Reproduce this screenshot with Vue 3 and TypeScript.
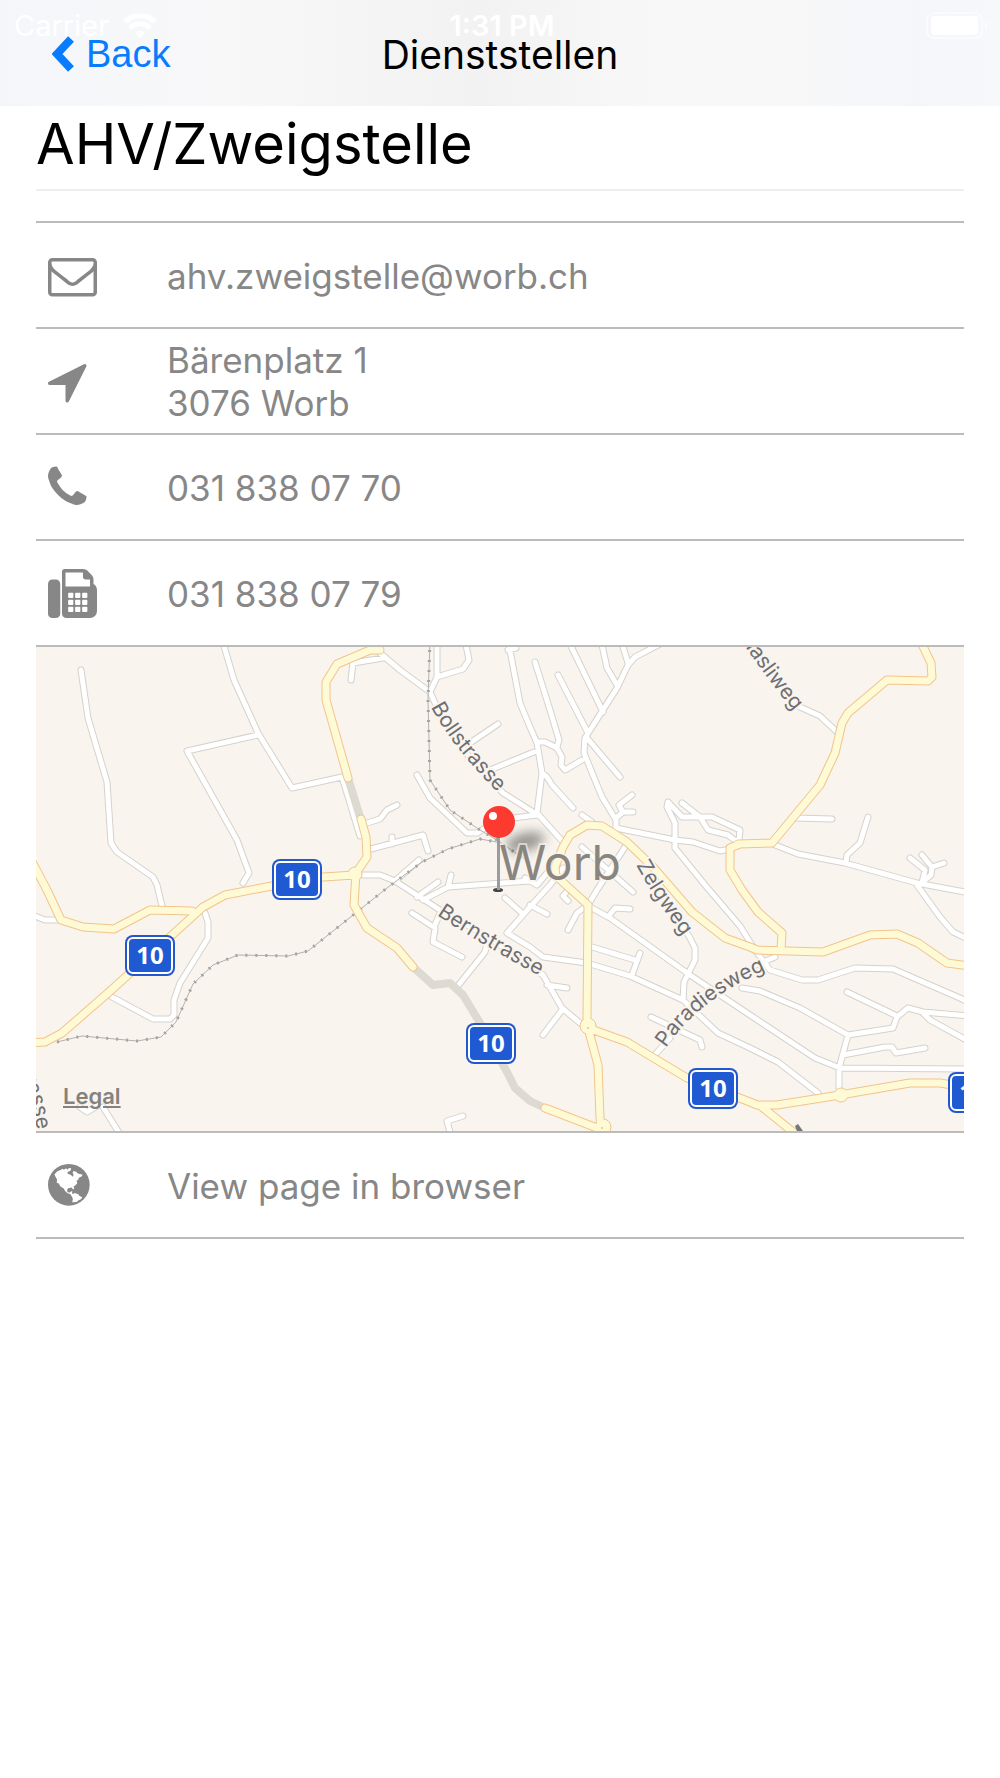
<script setup lang="ts">
interface ContactRow {
  icon: 'mail' | 'arrow' | 'phone' | 'fax'
  href: string
  lines: string[]
}

interface Shield {
  x: number
  y: number
}

const contacts: ContactRow[] = [
  { icon: 'mail', href: 'mailto:ahv.zweigstelle@worb.ch', lines: ['ahv.zweigstelle@worb.ch'] },
  { icon: 'arrow', href: '#map', lines: ['Bärenplatz 1', '3076 Worb'] },
  { icon: 'phone', href: 'tel:+41318380770', lines: ['031 838 07 70'] },
  { icon: 'fax', href: 'tel:+41318380779', lines: ['031 838 07 79'] },
]

const icons: Record<ContactRow['icon'], { box: string; path: string }> = {
  mail: {
    box: '0 0 1792 1792',
    path: 'M1664 1504v-768q-32 36-69 66-268 206-426 338-51 43-83 67t-86.5 48.5-102.5 24.5h-2q-48 0-102.5-24.5t-86.5-48.5-83-67q-158-132-426-338-37-30-69-66v768q0 13 9.5 22.5t22.5 9.5h1472q13 0 22.5-9.5t9.5-22.5zm0-1051v-24.5l-.5-13-3-12.5-5.5-9-9-7.5-14-2.5h-1472q-13 0-22.5 9.5t-9.5 22.5q0 168 147 284 193 152 401 317 6 5 35 29.5t46 37.5 44.5 31.5 50.5 27.5 43 9h2q20 0 43-9t50.5-27.5 44.5-31.5 46-37.5 35-29.5q208-165 401-317 54-43 100.5-115.5t46.5-131.5zm128-37v1088q0 66-47 113t-113 47h-1472q-66 0-113-47t-47-113v-1088q0-66 47-113t113-47h1472q66 0 113 47t47 113z',
  },
  arrow: {
    box: '192 0 1792 1792',
    path: 'M1593 349l-640 1280q-17 35-57 35-5 0-15-2-22-5-35.5-22.5t-13.5-39.5v-576h-576q-22 0-39.5-13.5t-22.5-35.5 4-42 29-30l1280-640q13-7 29-7 27 0 45 19 15 14 18.5 34.5t-6.5 39.5z',
  },
  phone: {
    box: '192 0 1792 1792',
    path: 'M1600 1240q0 27-10 70.5t-21 68.5q-21 50-122 106-94 51-186 51-27 0-53-3.5t-57.5-12.5-47-14.5-55.5-20.5-49-18q-98-35-175-83-127-79-264-216t-216-264q-48-77-83-175-3-9-18-49t-20.5-55.5-14.5-47-12.5-57.5-3.5-53q0-92 51-186 56-101 106-122 25-11 68.5-21t70.5-10q14 0 21 3 18 6 53 76 11 19 30 54t35 63.5 31 53.5q3 4 17.5 25t21.5 35.5 7 28.5q0 20-28.5 50t-62 55-62 53-28.5 46q0 9 5 22.5t8.5 20.5 14 24 11.5 19q76 137 174 235t235 174q2 1 19 11.5t24 14 20.5 8.5 22.5 5q18 0 46-28.5t53-62 55-62 50-28.5q14 0 28.5 7t35.5 21.5 25 17.5q25 15 53.5 31t63.5 35 54 30q70 35 76 53 3 7 3 21z',
  },
  fax: {
    box: '0 0 1792 1792',
    path:
      'M288 384q66 0 113 47t47 113v1088q0 66-47 113t-113 47h-128q-66 0-113-47t-47-113v-1088q0-66 47-113t113-47h128z' +
      'M1664 547q58 34 93 93t35 128v768q0 106-75 181t-181 75h-864q-66 0-113-47t-47-113v-1536q0-40 28-68t68-28h672q40 0 88 20t76 48l152 152q28 28 48 76t20 88v163z' +
      'M1536 640v-256h-160q-40 0-68-28t-28-68v-160h-640v512z' +
      [736, 992, 1248]
        .flatMap((x) =>
          [864, 1120, 1376].map(
            (y) => `M${x + 32} ${y}h128q32 0 32 32v128q0 32-32 32h-128q-32 0-32-32v-128q0-32 32-32z`,
          ),
        )
        .join(''),
  },
}

// Local streets
const streets: string = [
  'M81 670L88 718 107 782 111 843 117 852 153 877 157 885 162 906',
  'M224 646L234 680 258 733 292 788 342 777 360 836',
  'M258 735L187 751 237 840 249 873 243 883',
  'M30 914L45 920 57 920',
  'M205 913L208 922 208 938 180 983 174 1000 174 1015 170 1019 153 1019 112 997',
  'M380 653L400 670 430 692 435 703 465 752 503 793 530 810 537 815',
  'M383 658L353 663 351 680',
  'M430 692L437 677 437 640',
  'M437 677L463 669 469 660 465 640',
  'M508 640L520 703 530 727 537 743 542 773 537 813 563 842',
  'M508 650L516 648',
  'M498 724L470 743M534 752L490 770',
  'M417 775L430 798 467 833 477 833 487 827 513 818 537 815',
  'M367 823L380 819 387 810 397 805',
  'M371 849L423 835 428 851M392 844L392 837',
  'M363 875L380 875 395 881 440 910 490 938 530 967 543 975 562 1008 580 1023',
  'M419 860L395 881M438 882L417 897',
  'M423 900L448 887 530 881M451 875L448 887',
  'M412 913L435 928 433 942 462 957M435 925L440 913',
  'M457 987L485 952 487 943M505 898L522 913',
  'M507 933L530 907 550 885 563 868',
  'M507 933L530 947 543 957 587 963 630 976 683 1000 718 1033 750 1048 778 1062 818 1093',
  'M530 905L547 914M568 890L563 896 568 901',
  'M535 662L550 710 559 740 557 747',
  'M537 742L545 742 557 748 562 757 561 765 565 770 582 760',
  'M542 773L547 777 552 785 573 808',
  'M558 675L588 733M568 640L603 712M601 640L607 668 617 685M621 640L628 663',
  'M664 642L635 657 628 665 617 688 585 738 584 753 602 797 616 820 616 828',
  'M587 738L620 777',
  'M632 795L619 805 623 812 616 818M623 812L633 812M582 815L592 822',
  'M616 828L675 840 693 842 720 851 730 849',
  'M675 848L675 823 667 807 668 802 682 817 712 817 740 830 739 840',
  'M682 803L700 817 708 830 728 835 737 842',
  'M675 848L705 885 740 926 755 950 770 970 802 980 818 980 855 968 893 969 960 998 970 1003',
  'M582 847L633 892M625 847L597 890 588 905M547 873L537 885 525 878',
  'M588 905L577 913 568 930M608 917L615 908 630 909',
  'M590 907L610 918 690 975 750 1015 815 1058 840 1068 970 1069',
  'M592 947L635 960M640 953L632 975',
  'M682 925L690 938 695 948 695 960 684 982 683 1000',
  'M547 985L567 988M562 1010L543 1035',
  'M651 1017L700 1040 702 1047M653 1057L670 1038',
  'M742 988L760 991 800 1008 848 1035 893 1028 897 1017 908 1008 923 1012 970 1016',
  'M847 992L897 1016M923 1013L930 1020 970 1042',
  'M848 1035L839 1068 839 1088M843 1055L885 1047 892 1047 896 1053 925 1048',
  'M775 957L756 965',
  'M800 707L820 716 837 732M795 818L832 819',
  'M775 845L798 854 845 863 917 883 970 893',
  'M917 885L940 917 953 932 970 940',
  'M868 817L860 843 847 855 846 863',
  'M910 858L925 870 922 883M922 855L932 867 944 863M932 867L931 875 920 884',
  'M103 1107L121 1136M80 1107L87 1112 97 1106',
  'M463 1116L447 1121 451 1136',
].join('')

// Cantonal and main roads
const mainRoads: string = [
  'M30 858L47 890 61 920 83 927 114 929 150 910 192 911',
  'M28 1043L45 1042 62 1033 108 993 192 917 203 907 225 895 277 885 323 877 355 875',
  'M380 650L370 650 337 664 326 682 326 700 348 778',
  'M361 819L366 837 367 857 356 873 354 905 367 928 397 948 413 967',
  'M545 1108L597 1128 602 1130',
  'M740 844L730 848 730 870 742 890 758 912 782 933 781 950',
  'M588 905L556 876 555 867 563 847 570 835 587 825 602 826 627 842 653 867 673 890 692 912 725 938 750 947 757 950 823 952 870 935 897 934 918 943 947 963 970 966',
  'M588 905L587 1018 588 1028 598 1065 600 1118 602 1138',
  'M588 1028L627 1042 687 1078 750 1102 757 1105 777 1105 840 1095 910 1083 940 1083 970 1088',
  'M762 1107L798 1136',
  'M738 844L772 843 820 785 835 753 842 723 848 713 887 680 928 681 932 677 931 663 920 640',
].join('')

const tunnels = 'M348 778L360 817M413 967L433 985 450 983 463 995 480 1023 507 1072 515 1088 530 1101 545 1108'

const railways =
  'M57 1042L82 1036 137 1041 161 1037 176 1022 193 984 213 965 238 955 288 956 308 951 387 888 422 862 448 849 480 839 497 842' +
  'M430 640L428 700 430 780 450 810 480 830 497 840 530 863'

const shields: Shield[] = [
  { x: 272, y: 859 },
  { x: 125, y: 935 },
  { x: 466, y: 1023 },
  { x: 688, y: 1068 },
  { x: 948, y: 1072 },
]
</script>

<template>
  <div class="screen">
    <header class="navbar">
      <div class="status" aria-hidden="true">
        <span class="carrier">
          Carrier
          <svg class="wifi" viewBox="0 0 34 24">
            <path d="M17 24l5-5a7 7 0 0 0-10 0z" />
            <path d="M7 14a14 14 0 0 1 20 0M2 8a21 21 0 0 1 30 0" class="wave" />
          </svg>
        </span>
        <span class="clock">1:31 PM</span>
        <svg class="battery" viewBox="0 0 64 28">
          <rect x="1" y="1" width="55" height="25" rx="7" class="shell" />
          <rect x="5" y="4" width="47" height="19" rx="3" />
          <path d="M59 9q5 5 0 9z" class="cap" />
        </svg>
      </div>
      <div class="bar">
        <button type="button" class="back">
          <svg class="chevron" viewBox="0 0 22 36"><path d="M19 3L5 18l14 15" /></svg>
          Back
        </button>
        <span class="bar-title">Dienststellen</span>
      </div>
    </header>

    <main class="content">
      <h1 class="heading">AHV/Zweigstelle</h1>

      <div class="list">
        <a v-for="row in contacts" :key="row.icon" class="row" :href="row.href">
          <svg class="icon" :viewBox="icons[row.icon].box">
            <path fill-rule="evenodd" :d="icons[row.icon].path" />
          </svg>
          <span class="label">
            <span v-for="line in row.lines" :key="line" class="line">{{ line }}</span>
          </span>
        </a>

        <div id="map" class="map">
          <svg class="map-canvas" viewBox="36 647 928 484" role="img" aria-label="Map of Worb">
            <defs>
              <filter id="soft" x="-50%" y="-100%" width="200%" height="300%">
                <feGaussianBlur stdDeviation="6" />
              </filter>
              <path id="p-boll" d="M431 707Q454 751 510 804" />
              <path id="p-bern" d="M437 915Q480 944 556 985" />
              <path id="p-zelg" d="M636 865Q658 905 694 951" />
              <path id="p-para" d="M666 1048Q700 996 780 964" />
              <path id="p-hasli" d="M727 619Q760 671 794 711" />
              <path id="p-edge" d="M6 1050Q30 1080 37 1130" />
            </defs>
            <rect x="36" y="647" width="928" height="484" fill="#f9f5ee" />
            <path :d="streets" class="street-edge" />
            <path :d="streets" class="street" />
            <path :d="tunnels" class="tunnel" />
            <path :d="railways" class="rail" />
            <path :d="railways" class="rail-ties" />
            <path :d="mainRoads" class="main-edge" />
            <circle cx="588" cy="1026" r="8" class="junction" />
            <circle cx="603" cy="1127" r="8" class="junction" />
            <circle cx="841" cy="1095" r="7" class="junction" />
            <circle cx="355" cy="874" r="7" class="junction" />
            <path :d="mainRoads" class="main" />
            <circle cx="588" cy="1028" r="1" fill="#dfc590" />
            <circle cx="602" cy="1128" r="1" fill="#dfc590" />
            <path d="M795 1126l3-2 5 7h-6z" fill="#77777b" />

            <g class="road-name">
              <text><textPath href="#p-boll">Bollstrasse</textPath></text>
              <text><textPath href="#p-bern">Bernstrasse</textPath></text>
              <text><textPath href="#p-zelg">Zelgweg</textPath></text>
              <text><textPath href="#p-para">Paradiesweg</textPath></text>
              <text text-anchor="end"><textPath href="#p-hasli" startOffset="100%">Hasliweg</textPath></text>
              <text text-anchor="end"><textPath href="#p-edge" startOffset="100%">strasse</textPath></text>
            </g>

            <g v-for="s in shields" :key="`${s.x}-${s.y}`" class="shield">
              <rect :x="s.x" :y="s.y" width="50" height="41" rx="8" fill="#2257cf" />
              <rect :x="s.x + 3" :y="s.y + 3" width="44" height="35" rx="5" fill="#1f5ad2" stroke="#fff" stroke-width="2" />
              <text :x="s.x + 25" :y="s.y + 29" text-anchor="middle">10</text>
            </g>

            <ellipse cx="525" cy="842" rx="20" ry="9" transform="rotate(-15 525 842)" fill="#000" opacity=".4" filter="url(#soft)" />
            <text x="499" y="880" class="town">Worb</text>
            <ellipse cx="498" cy="890" rx="5" ry="2" fill="#444" />
            <rect x="497" y="836" width="3" height="54" fill="#9a9d9f" />
            <circle cx="499" cy="822" r="16" fill="#fd3a30" />
            <circle cx="493" cy="816" r="4" fill="#fff" />
          </svg>
          <a class="legal" href="#legal">Legal</a>
        </div>

        <a class="row" href="#browser">
          <svg class="icon globe" viewBox="55 135 125 125">
            <circle cx="117" cy="197" r="62" />
            <path
              fill="#fff"
              d="M74 166l8-9 12-5 4-3 4 3 7-4 3 4 6-5 6 1-2 7-9 4 1 5 8 3 7 6 2-7-3-5 3-5 8 2 5 5 14 4-3 5-8 4-2 6-5 3 2 7-6 7-5 3 2 7-3 2-5-6-10 2-3 5 1 7 7 1 4-4 4 1-2 6 6 2 1 7 6 3-4 2-9-5-5-8-8-2-7-7-5-8-9-5-5-9-6-2 1-9z"
            />
            <path fill="#fff" d="M129 224l6-3 10 4 4 5 8 4-4 6-7 3-6 5-13 1 2-9-2-6z" />
          </svg>
          <span class="label"><span class="line">View page in browser</span></span>
        </a>
      </div>
    </main>
  </div>
</template>

<style>
body {
  margin: 0;
  background: #fff;
}
</style>

<style scoped>
.screen {
  min-height: 100vh;
  background: #fff;
  font-family: Inter, 'Liberation Sans', sans-serif;
  color: #000;
}

.navbar {
  position: relative;
  height: 106px;
  background: linear-gradient(90deg, #f4f6f9 0%, #f8f8f9 22%, #f2f2f2 48%, #f8f8f8 66%, #f8f8f8 78%, #f4f6fa 92%, #f7f8fa 100%);
}

.status {
  position: absolute;
  inset: 8px 10px auto 14px;
  display: grid;
  grid-template-columns: 1fr auto 1fr;
  align-items: center;
  height: 34px;
  font-size: 29px;
  color: #fff;
  fill: #fff;
}

.carrier {
  display: flex;
  align-items: center;
  gap: 14px;
}

.wifi {
  width: 34px;
  height: 24px;
}

.wave {
  fill: none;
  stroke: #fff;
  stroke-width: 5;
}

.clock {
  font-weight: 600;
}

.battery {
  justify-self: end;
  width: 64px;
  height: 28px;
}

.shell {
  fill: none;
  stroke: #fff;
  stroke-width: 2;
  opacity: 0.5;
}

.cap {
  opacity: 0.6;
}

.bar {
  position: relative;
  display: grid;
  grid-template-columns: 1fr auto 1fr;
  align-items: center;
  height: 108px;
  padding: 0 52px;
}

.back {
  display: flex;
  align-items: center;
  justify-self: start;
  gap: 12px;
  padding: 0;
  border: 0;
  background: none;
  font: 38px/44px 'Liberation Sans', Arial, sans-serif;
  color: #087cff;
}

.chevron {
  width: 22px;
  height: 36px;
  fill: none;
  stroke: #087cff;
  stroke-width: 8;
}

.bar-title {
  padding-top: 2px;
  font-size: 39px;
  line-height: 48px;
}

.content {
  padding: 0 36px;
}

.heading {
  margin: 0 0 30px;
  padding: 3px 0 10px;
  border-bottom: 2px solid #eee;
  font-size: 56px;
  font-weight: 400;
  line-height: 70px;
}

.list {
  border-top: 2px solid #bbb;
}

.row {
  display: flex;
  align-items: center;
  gap: 70px;
  box-sizing: border-box;
  min-height: 106px;
  padding-left: 12px;
  border-bottom: 2px solid #bbb;
  color: #878787;
  text-decoration: none;
}

.icon {
  flex: none;
  width: 49px;
  height: 49px;
  fill: #878787;
}

.globe {
  width: 42px;
  height: 42px;
  margin-right: 7px;
}

.label {
  padding-top: 2px;
}

.line {
  display: block;
  font-size: 35px;
  line-height: 43px;
}

.map {
  position: relative;
  border-bottom: 2px solid #bbb;
}

.map-canvas {
  display: block;
  width: 100%;
}

.street-edge,
.street,
.main-edge,
.main,
.tunnel,
.rail,
.rail-ties {
  fill: none;
  stroke-linecap: round;
  stroke-linejoin: round;
}

.street-edge {
  stroke: #d5d2cd;
  stroke-width: 7;
}

.street {
  stroke: #fff;
  stroke-width: 5;
}

.tunnel {
  stroke: #dddad2;
  stroke-width: 8;
  stroke-linecap: butt;
}

.rail {
  stroke: #b3b1ae;
  stroke-width: 1;
}

.rail-ties {
  stroke: #a6a4a2;
  stroke-width: 3;
  stroke-dasharray: 2 8;
  stroke-linecap: butt;
}

.main-edge {
  stroke: #f2c48a;
  stroke-width: 9;
}

.junction {
  fill: #fffad6;
  stroke: #f2c48a;
}

.main {
  stroke: #fffad6;
  stroke-width: 7;
}

.road-name {
  font-size: 21px;
  font-weight: 400;
  fill: #6f6f73;
  stroke: #f9f5ee;
  stroke-width: 4;
  stroke-linejoin: round;
  paint-order: stroke;
}

.shield text {
  font: 700 24px 'Noto Sans', sans-serif;
  fill: #fff;
}

.town {
  font-size: 48px;
  font-weight: 400;
  fill: #8a867f;
  stroke: #f9f5ee;
  stroke-opacity: 0.6;
  stroke-width: 4;
  paint-order: stroke;
}

.legal {
  position: absolute;
  left: 27px;
  bottom: 21px;
  font-size: 22px;
  font-weight: 600;
  line-height: 28px;
  color: #84827f;
}
</style>
